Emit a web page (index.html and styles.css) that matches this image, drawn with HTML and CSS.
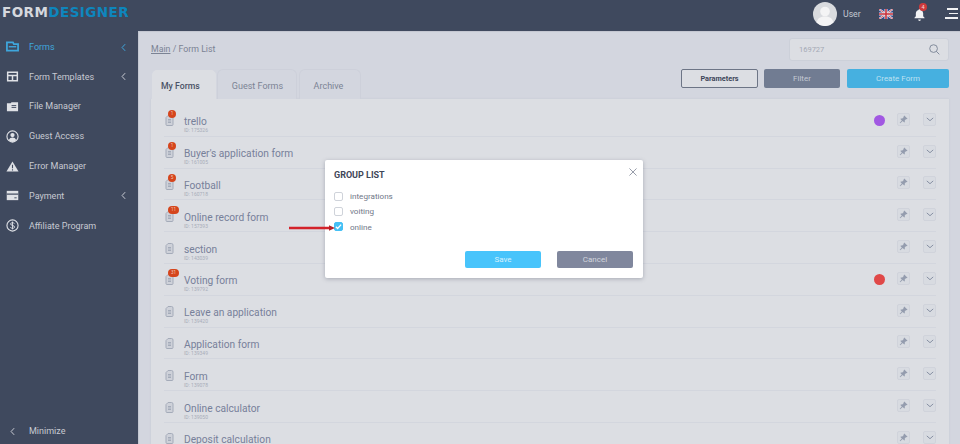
FILE: index.html
```html
<!DOCTYPE html>
<html lang="en">
<head>
<meta charset="utf-8">
<title>Form List</title>
<link rel="stylesheet" href="styles.css">
</head>
<body>
<svg class="defs" width="0" height="0" aria-hidden="true">
  <symbol id="doc" viewBox="0 0 9 11">
    <path d="M3 .5h3.500a1.500 1.500 0 0 1 1.500 1.500v7.500a1 1 0 0 1-1 1H2a1 1 0 0 1-1-1V2.600z" fill="#ced1d9" stroke="#a4abb9" stroke-width="1"/>
    <path d="M3 4.500h3M3 6h3M3 7.500h3" stroke="#a4abb9" stroke-width="1"/>
  </symbol>
  <symbol id="pin" viewBox="0 0 12 12">
    <path d="M7 .6l4.400 4.400-1 .7-.8-.3-2 2 .2 1.800-.8.8-2-2L1.600 11 1 10.400 3.800 7.400 1.800 5.400l.8-.8 1.800.2 2-2-.3-.8z" fill="#949cae"/>
  </symbol>
  <symbol id="chev" viewBox="0 0 10 6">
    <path d="M1 1l4 3.500L9 1" fill="none" stroke="#7d869b" stroke-width="1.100"/>
  </symbol>
  <symbol id="side-chev" viewBox="0 0 6 10">
    <path d="M5 1L1.300 5 5 9" fill="none" stroke="currentColor" stroke-width="1.200"/>
  </symbol>
</svg>

<header class="topbar">
  <div class="logo"><span class="logo-a">FORM</span><span class="logo-b">DESIGNER</span></div>
  <div class="top-right">
    <svg class="avatar" viewBox="0 0 24 24"><circle cx="12" cy="12" r="12" fill="#d9dbdf"/><circle cx="12" cy="9.500" r="4.800" fill="#f4f4f5"/><path d="M3.500 20.500c1-4.500 4.500-6 8.500-6s7.500 1.500 8.500 6A12 12 0 0 1 3.500 20.500z" fill="#f4f4f5"/></svg>
    <span class="user">User</span>
    <svg class="flag" viewBox="0 0 14 10"><rect width="14" height="10" fill="#2f4a8c"/><path d="M0 0l14 10M14 0L0 10" stroke="#e8e8ec" stroke-width="2"/><path d="M0 0l14 10M14 0L0 10" stroke="#c8323c" stroke-width=".7"/><path d="M7 0v10M0 5h14" stroke="#e8e8ec" stroke-width="3"/><path d="M7 0v10M0 5h14" stroke="#c8323c" stroke-width="1.600"/></svg>
    <span class="bell">
      <svg viewBox="0 0 12 14" width="11" height="13"><path d="M6 1a1 1 0 0 1 1 1c2 .5 3 2 3 4v3l1.500 1.500v.5H.5v-.5L2 9V6c0-2 1-3.500 3-4a1 1 0 0 1 1-1z" fill="#f2f3f5"/><path d="M4.500 12.500h3a1.500 1.500 0 0 1-3 0z" fill="#f2f3f5"/></svg>
      <span class="bell-count">4</span>
    </span>
    <span class="burger"><i class="b1"></i><i class="b2"></i><i class="b3"></i></span>
  </div>
</header>

<div class="body-row">
  <nav class="sidebar">
    <ul class="menu">
      <li class="item active">
        <svg class="ico" viewBox="0 0 14 12"><path d="M1 1.500h6.500l1 2H13v7H1z" fill="none" stroke="currentColor" stroke-width="1.900"/><path d="M3 5.500h8v1.500H3z" fill="currentColor"/></svg>
        <span class="label">Forms</span>
        <svg class="arrow"><use href="#side-chev"/></svg>
      </li>
      <li class="item">
        <svg class="ico" viewBox="0 0 14 12"><path d="M1.800 1.500h10.400v9H1.800zM2 5h10M7 5v5.500" fill="none" stroke="currentColor" stroke-width="1.600"/></svg>
        <span class="label">Form Templates</span>
        <svg class="arrow"><use href="#side-chev"/></svg>
      </li>
      <li class="item">
        <svg class="ico" viewBox="0 0 14 12"><path d="M1 2.500h4l1-1.200h7v9.700H1z" fill="currentColor"/><path d="M6 5h5M6 7h5" stroke="#3f495e" stroke-width="1"/></svg>
        <span class="label">File Manager</span>
      </li>
      <li class="item">
        <svg class="ico" viewBox="0 0 14 14"><circle cx="7" cy="7" r="6" fill="none" stroke="currentColor" stroke-width="1.200"/><circle cx="7" cy="5.500" r="2.300" fill="currentColor"/><path d="M3 11c.8-2 2.300-2.800 4-2.800s3.200.8 4 2.800a6 6 0 0 1-8 0z" fill="currentColor"/></svg>
        <span class="label">Guest Access</span>
      </li>
      <li class="item">
        <svg class="ico" viewBox="0 0 14 12"><path d="M7 .5l6.500 11H.5z" fill="currentColor"/><path d="M7 4v4M7 9v1.200" stroke="#3f495e" stroke-width="1.200"/></svg>
        <span class="label">Error Manager</span>
      </li>
      <li class="item">
        <svg class="ico" viewBox="0 0 14 12"><path d="M.8 1h12.400v10H.8z" fill="currentColor"/><path d="M.8 4.500h12.400" stroke="#3f495e" stroke-width="1.300"/><path d="M9 8.500h2.500" stroke="#3f495e" stroke-width="1"/></svg>
        <span class="label">Payment</span>
        <svg class="arrow"><use href="#side-chev"/></svg>
      </li>
      <li class="item">
        <svg class="ico" viewBox="0 0 14 14"><circle cx="7" cy="7" r="6" fill="none" stroke="currentColor" stroke-width="1.200"/><path d="M9 5c-.4-.8-1.100-1.100-2-1.100-1.200 0-2 .6-2 1.500C5 7.500 9.200 6.500 9.200 8.600c0 1-.9 1.500-2.200 1.500-1 0-1.800-.4-2.200-1.200M7 2.800v8.400" fill="none" stroke="currentColor" stroke-width="1"/></svg>
        <span class="label">Affiliate Program</span>
      </li>
    </ul>
    <div class="item minimize">
      <svg class="min-arrow"><use href="#side-chev"/></svg>
      <span class="label">Minimize</span>
    </div>
  </nav>

  <main class="content">
    <div class="crumb-row">
      <div class="crumbs"><a class="crumb-link">Main</a> / Form List</div>
      <div class="search">
        <span>169727</span>
        <svg viewBox="0 0 12 12" width="11" height="11"><circle cx="5" cy="5" r="4.200" fill="none" stroke="#7b8496" stroke-width="1"/><path d="M8 8l3.300 3.300" stroke="#7b8496" stroke-width="1"/></svg>
      </div>
    </div>

    <div class="tab-row">
      <div class="tabs">
        <div class="tab on">My Forms</div>
        <div class="tab guest">Guest Forms</div>
        <div class="tab archive">Archive</div>
      </div>
      <div class="actions">
        <button class="btn params">Parameters</button>
        <button class="btn filter">Filter</button>
        <button class="btn create">Create Form</button>
      </div>
    </div>

    <section class="panel">
      <div class="row"><span class="doc"><svg><use href="#doc"/></svg><b class="badge">1</b></span><div class="info"><div class="name">trello</div><div class="fid">ID: 175326</div></div><i class="dot purple"></i><span class="sq"><svg class="p"><use href="#pin"/></svg></span><span class="sq"><svg class="c"><use href="#chev"/></svg></span></div>
      <div class="row"><span class="doc"><svg><use href="#doc"/></svg><b class="badge">1</b></span><div class="info"><div class="name">Buyer's application form</div><div class="fid">ID: 161005</div></div><span class="sq"><svg class="p"><use href="#pin"/></svg></span><span class="sq"><svg class="c"><use href="#chev"/></svg></span></div>
      <div class="row"><span class="doc"><svg><use href="#doc"/></svg><b class="badge">5</b></span><div class="info"><div class="name">Football</div><div class="fid">ID: 160718</div></div><span class="sq"><svg class="p"><use href="#pin"/></svg></span><span class="sq"><svg class="c"><use href="#chev"/></svg></span></div>
      <div class="row"><span class="doc"><svg><use href="#doc"/></svg><b class="badge wide">11</b></span><div class="info"><div class="name">Online record form</div><div class="fid">ID: 157393</div></div><span class="sq"><svg class="p"><use href="#pin"/></svg></span><span class="sq"><svg class="c"><use href="#chev"/></svg></span></div>
      <div class="row"><span class="doc"><svg><use href="#doc"/></svg></span><div class="info"><div class="name">section</div><div class="fid">ID: 143039</div></div><span class="sq"><svg class="p"><use href="#pin"/></svg></span><span class="sq"><svg class="c"><use href="#chev"/></svg></span></div>
      <div class="row"><span class="doc"><svg><use href="#doc"/></svg><b class="badge wide">31</b></span><div class="info"><div class="name">Voting form</div><div class="fid">ID: 139792</div></div><i class="dot red"></i><span class="sq"><svg class="p"><use href="#pin"/></svg></span><span class="sq"><svg class="c"><use href="#chev"/></svg></span></div>
      <div class="row"><span class="doc"><svg><use href="#doc"/></svg></span><div class="info"><div class="name">Leave an application</div><div class="fid">ID: 139420</div></div><span class="sq"><svg class="p"><use href="#pin"/></svg></span><span class="sq"><svg class="c"><use href="#chev"/></svg></span></div>
      <div class="row"><span class="doc"><svg><use href="#doc"/></svg></span><div class="info"><div class="name">Application form</div><div class="fid">ID: 139349</div></div><span class="sq"><svg class="p"><use href="#pin"/></svg></span><span class="sq"><svg class="c"><use href="#chev"/></svg></span></div>
      <div class="row"><span class="doc"><svg><use href="#doc"/></svg></span><div class="info"><div class="name">Form</div><div class="fid">ID: 139078</div></div><span class="sq"><svg class="p"><use href="#pin"/></svg></span><span class="sq"><svg class="c"><use href="#chev"/></svg></span></div>
      <div class="row"><span class="doc"><svg><use href="#doc"/></svg></span><div class="info"><div class="name">Online calculator</div><div class="fid">ID: 139050</div></div><span class="sq"><svg class="p"><use href="#pin"/></svg></span><span class="sq"><svg class="c"><use href="#chev"/></svg></span></div>
      <div class="row"><span class="doc"><svg><use href="#doc"/></svg></span><div class="info"><div class="name">Deposit calculation</div></div><span class="sq"><svg class="p"><use href="#pin"/></svg></span><span class="sq"><svg class="c"><use href="#chev"/></svg></span></div>
    </section>
  </main>
</div>

<div class="modal">
  <svg class="close" viewBox="0 0 9 9" width="8" height="8"><path d="M.5.5l8 8M8.500.5l-8 8" stroke="#7d8494" stroke-width=".9"/></svg>
  <h2 class="modal-title">GROUP LIST</h2>
  <div class="check-list">
    <label class="check"><i class="box"></i>integrations</label>
    <label class="check"><i class="box"></i>voiting</label>
    <label class="check"><i class="box checked"><svg viewBox="0 0 8 8" width="7" height="7"><path d="M1 4.200l2 2 4-4.400" fill="none" stroke="#fff" stroke-width="1.500"/></svg></i>online</label>
  </div>
  <div class="modal-actions">
    <button class="btn save">Save</button>
    <button class="btn cancel">Cancel</button>
  </div>
</div>

<svg class="red-arrow" viewBox="0 0 46 6" width="46" height="6"><path d="M0 3h41" stroke="#d3222a" stroke-width="2.400"/><path d="M40 .3L46 3l-6 2.700z" fill="#b5232a"/></svg>
</body>
</html>
```

FILE: styles.css
```css
* { box-sizing: border-box; }
html, body { margin: 0; height: 100%; overflow: hidden; }
body {
  font-family: Roboto, "Liberation Sans", sans-serif;
  background: #3f495e;
  color: #77809a;
  display: flex;
  flex-direction: column;
  height: 444px;
  position: relative;
}
.defs { position: absolute; }

.topbar {
  height: 31px;
  flex: none;
  display: flex;
  align-items: center;
  justify-content: space-between;
  background: #3f495e;
}
.logo {
  padding-left: 2px;
  font-family: "DejaVu Sans", sans-serif;
  font-weight: 700;
  font-size: 13.500px;
  letter-spacing: .45px;
  margin-top: -7px;
}
.logo-a { color: #d5d8de; }
.logo-b { color: #0e86bd; }
.top-right { display: flex; align-items: center; height: 100%; }
.avatar { width: 24px; height: 24px; margin-right: 6px; margin-top: -4px; }
.user { font-size: 8.700px; color: #c4c8d1; width: 24px; margin-right: 12px; margin-top: -4px; }
.flag { width: 14px; height: 10px; margin-right: 21px; margin-top: -4px; }
.bell { position: relative; width: 11px; height: 13px; margin-right: 20px; margin-top: -3px; }
.bell svg { display: block; }
.bell-count {
  position: absolute; top: -5px; left: 5px;
  width: 8px; height: 8px; border-radius: 50%;
  background: #cf3a3c; color: #f4dcdc;
  font-size: 5.500px; line-height: 8px; text-align: center;
}
.burger { display: flex; flex-direction: column; align-items: flex-end; gap: 3px; width: 13px; margin-right: 2px; margin-top: -4px; }
.burger i { display: block; height: 1.500px; background: #f1f2f4; }
.b1 { width: 11px; } .b2 { width: 9px; } .b3 { width: 13px; }

.body-row { flex: 1; display: flex; min-height: 0; }

.sidebar {
  width: 138px;
  flex: none;
  display: flex;
  flex-direction: column;
  justify-content: space-between;
}
.menu { list-style: none; margin: 0; padding: 0; padding-top: 1px; }
.item {
  height: 29.800px;
  display: flex;
  align-items: center;
  position: relative;
  padding-left: 6px;
  font-size: 9px;
  color: #c7cad2;
}
.item .ico { width: 13px; height: 13px; margin-right: 10px; flex: none; color: #dfe1e6; }
.item.active, .item.active .ico { color: #3fa6dc; }
.arrow { position: absolute; left: 121px; top: 10.500px; width: 5px; height: 9px; }
.minimize { padding-left: 10px; height: 26px; }
.min-arrow { width: 5px; height: 9px; margin-right: 14px; }

.content {
  flex: 1;
  min-width: 0;
  background: #d3d6df;
  padding: 0 11px 0 13px;
  overflow: hidden;
  box-shadow: inset 1px 1px 1px #c2c6d0;
}
.crumb-row { display: flex; justify-content: space-between; height: 38px; padding-top: 7px; }
.crumbs { font-size: 8.800px; color: #7b8394; padding-top: 6px; }
.crumb-link { text-decoration: underline; }
.search {
  width: 160px; height: 23px;
  display: flex; align-items: center; justify-content: space-between;
  background: #dcdee3; border: 1px solid #ccd0d9; border-radius: 3px;
  padding: 0 8px 0 9px;
  font-size: 7.500px; color: #a4a9b5;
}
.tab-row { display: flex; justify-content: space-between; height: 30px; }
.tabs { display: flex; align-items: flex-end; }
.tab {
  height: 30px;
  padding-top: 11px;
  font-size: 9px;
  color: #7b8394;
  text-align: center;
  background: #d3d6df;
  border: 1px solid #cdd0da;
  border-bottom: none;
  border-radius: 6px 6px 0 0;
}
.tab.on { width: 66px; padding-left: 9px; text-align: left; background: #dcdee3; color: #4a5266; font-weight: 500; border-color: #d3d6df; font-size: 8.700px; }
.tab.guest { width: 80px; padding-left: 1px; }
.tab.archive { width: 62px; margin-left: 2px; padding-right: 3px; }
.actions { display: flex; gap: 6px; }
.btn {
  font-family: inherit;
  height: 19px;
  padding: 0;
  border-radius: 2px;
  border: none;
  font-size: 8px;
  cursor: pointer;
}
.params { width: 77px; background: #dcdee3; color: #3c4559; font-weight: 700; border: 1px solid #6d7586; font-size: 7.300px; }
.filter { width: 76px; background: #717c92; color: #c4c9d4; }
.create { width: 102px; background: #46b0e0; color: #bde0f1; margin-left: 1px; }

.panel {
  background: #dcdee3;
  padding: 6px 13px 0 13px;
  box-shadow: 0 0 2px #c5c9d3;
  height: 400px;
}
.row {
  height: 31.800px;
  display: flex;
  align-items: center;
  border-bottom: 1px solid #d3d6de;
}
.doc { position: relative; width: 20px; height: 11px; flex: none; margin-top: 1px; }
.doc svg { width: 9px; height: 11px; display: block; margin-left: 1px; }
.badge {
  position: absolute; left: 4px; top: -5px;
  width: 8px; height: 8px; border-radius: 50%;
  background: #d5451c; color: #f1c9b8;
  font-size: 4.500px; font-weight: 400; line-height: 8px; text-align: center;
}
.badge.wide { width: 11px; border-radius: 4px; }
.info { flex: 1; min-width: 0; min-height: 18px; margin-top: 8px; }
.name { font-size: 10.200px; line-height: 13px; color: #77809a; }
.fid { font-size: 5px; line-height: 5px; color: #a8adb9; }
.dot { width: 11px; height: 11px; border-radius: 50%; margin-right: 12px; margin-top: 1px; }
.purple { background: #a158e2; }
.red { background: #e04848; }
.sq {
  width: 13px; height: 13px; flex: none;
  display: flex; align-items: center; justify-content: center;
  background: #d8dbe1; border: 1px solid #d0d3db; border-radius: 2px;
  margin-top: -2px;
}
.sq + .sq { margin-left: 13px; }
.sq .p { width: 9px; height: 9px; }
.sq .c { width: 8px; height: 5px; }

.modal {
  position: absolute;
  left: 325px; top: 160px;
  width: 318px; height: 118px;
  background: #fff;
  border-radius: 2px;
  box-shadow: 0 1px 4px rgba(70, 78, 95, .35);
  padding: 10px 10px 10px 9px;
  display: flex;
  flex-direction: column;
}
.close { position: absolute; right: 6px; top: 8px; }
.modal-title { margin: 0 0 10px; font-size: 9px; line-height: 11px; font-weight: 700; color: #3f4658; }
.check-list { display: flex; flex-direction: column; gap: 5.400px; }
.check { display: flex; align-items: center; height: 10px; font-size: 8.100px; color: #6f7788; }
.box {
  width: 9px; height: 9px; margin-right: 7px;
  border: 1px solid #cfd3da; border-radius: 2px; background: #fff;
  display: flex; align-items: center; justify-content: center;
}
.box.checked { background: #45c0f5; border-color: #45c0f5; }
.modal-actions { margin-top: auto; display: flex; justify-content: flex-end; gap: 16px; }
.save { width: 76px; height: 17px; background: #48c4fb; color: #d6f1fe; }
.cancel { width: 76px; height: 17px; background: #80879d; color: #d3d6de; }

.red-arrow { position: absolute; left: 289px; top: 225px; }
```
